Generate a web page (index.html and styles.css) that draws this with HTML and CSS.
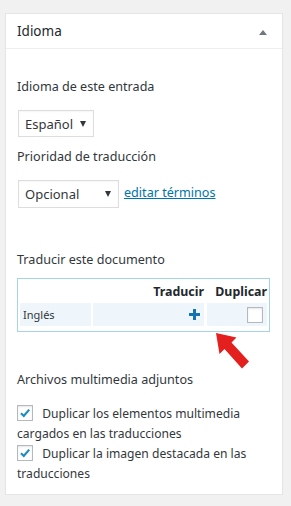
FILE: index.html
```html
<!DOCTYPE html>
<html lang="es">
<head>
  <meta charset="UTF-8" />
  <meta name="viewport" content="width=device-width, initial-scale=1" />
  <title>Idioma</title>
  <link rel="stylesheet" href="styles.css">
</head>
<body>
  <div class="postbox">
    <!-- Box header -->
    <div class="postbox-head">
      <h2>Idioma</h2>
      <span class="toggle-arrow"></span>
    </div>

    <div class="inside">
      <p class="label first">Idioma de este entrada</p>
      <div class="fake-select lang-select">
        <span>Español</span>
        <span class="caret"></span>
      </div>

      <p class="label prio">Prioridad de traducción</p>
      <div class="prio-row">
        <div class="fake-select prio-select">
          <span>Opcional</span>
          <span class="caret"></span>
        </div>
        <a href="#" class="edit-link">editar términos</a>
      </div>

      <p class="label doc">Traducir este documento</p>
      <div class="trans-table">
        <div class="th"></div>
        <div class="th right">Traducir</div>
        <div class="th right">Duplicar</div>
        <div class="td lang">Inglés</div>
        <div class="td right">
          <svg class="plus" width="11" height="11" viewBox="0 0 11 11">
            <rect x="4" y="0" width="3" height="11" fill="#1476b0"/>
            <rect x="0" y="4" width="11" height="3" fill="#1476b0"/>
          </svg>
        </div>
        <div class="td right dup"><span class="box"></span></div>

        <!-- red pointer over the table -->
        <svg class="pointer" width="40" height="40" viewBox="210 330 40 40">
          <polygon points="215,332 235.5,336.5 230.5,341.5 248,360.5 241,367.5 223.5,348 218.5,353" fill="#e3201d"/>
        </svg>
      </div>

      <p class="label media">Archivos multimedia adjuntos</p>
      <div class="check-line top">
        <span class="box checked"><svg width="14" height="14" viewBox="0 0 14 14"><path d="M3 7.2 L5.8 10 L11.2 3.6" fill="none" stroke="#1e8cbe" stroke-width="2.2"/></svg></span>
        Duplicar los elementos multimedia cargados en las traducciones
      </div>
      <div class="check-line">
        <span class="box checked"><svg width="14" height="14" viewBox="0 0 14 14"><path d="M3 7.2 L5.8 10 L11.2 3.6" fill="none" stroke="#1e8cbe" stroke-width="2.2"/></svg></span>
        Duplicar la imagen destacada en las traducciones
      </div>
    </div>
  </div>
</body>
</html>
```
FILE: styles.css
```css
/* Basic reset */
* {
  margin: 0;
  padding: 0;
  box-sizing: border-box;
}

body {
  background-color: #f1f1f1;
  font-family: "Noto Sans", "Open Sans", sans-serif;
  font-size: 12.5px;
  color: #32373c;
}

/* The meta box */
.postbox {
  width: 278px;
  margin: 13px 0 0 5px;
  background: #fff;
  border: 1px solid #e5e5e5;
  box-shadow: 0 1px 1px rgba(0, 0, 0, 0.04);
}

.postbox-head {
  height: 35px;
  display: flex;
  align-items: center;
  justify-content: space-between;
  padding: 0 15px 0 11px;
  border-bottom: 1px solid #eee;
}

.postbox-head h2 {
  font-size: 13.5px;
  font-weight: 400;
  color: #23282d;
  line-height: 20px;
}

.toggle-arrow {
  width: 0;
  height: 0;
  border-left: 4px solid transparent;
  border-right: 4px solid transparent;
  border-bottom: 5px solid #72777c;
  margin-top: 2px;
}

.inside {
  padding: 0 12px 10px 11px;
}

.label {
  line-height: 20px;
  font-size: 12.6px;
}
.label.first { margin-top: 28px; }
.label.prio  { margin-top: 10px; }
.label.doc   { margin-top: 42px; }
.label.media { margin-top: 38px; }

/* Select boxes drawn by hand */
.fake-select {
  display: flex;
  align-items: center;
  justify-content: space-between;
  height: 27px;
  padding: 0 7px 0 6px;
  border: 1px solid #ddd;
  background: #fff;
  color: #32373c;
  font-size: 13px;
  box-shadow: inset 0 1px 2px rgba(0, 0, 0, 0.04);
}
.lang-select {
  width: 76px;
  margin: 13px 0 0 1px;
}
.prio-select {
  width: 101px;
  height: 28px;
}
.caret {
  width: 0;
  height: 0;
  border-left: 3px solid transparent;
  border-right: 3px solid transparent;
  border-top: 6px solid #32373c;
}

.prio-row {
  display: flex;
  align-items: center;
  gap: 5px;
  margin: 13px 0 0 1px;
}
.edit-link {
  color: #0073aa;
  text-decoration: underline;
  line-height: 20px;
  margin-top: -3px;
  font-size: 12.6px;
}

/* Translation table */
.trans-table {
  position: relative;
  margin-top: 8px;
  border: 1px solid #a3d4ea;
  display: grid;
  grid-template-columns: 71px 111px 61px;
  column-gap: 2px;
  padding: 0 1px 5px 2px;
}
.trans-table .th {
  height: 24px;
  line-height: 26px;
  font-size: 12.4px;
  font-weight: 700;
  color: #23282d;
}
.trans-table .th.right:last-of-type {
  padding-right: 1px;
}
.trans-table .td {
  height: 23px;
  background: #eef6fb;
  display: flex;
  align-items: center;
  padding: 0 4px 0 3px;
}
.trans-table .td.dup {
  margin-left: 1px;
}
.trans-table .right {
  text-align: right;
  justify-content: flex-end;
}
.trans-table .td.lang {
  font-size: 11px;
}
.pointer {
  position: absolute;
  left: 193px;
  top: 52px;
}

/* Checkbox look */
.box {
  display: inline-block;
  width: 16px;
  height: 16px;
  border: 1px solid #b4b9be;
  background: #fff;
  box-shadow: inset 0 1px 2px rgba(0, 0, 0, 0.1);
  vertical-align: middle;
}
.box.checked svg {
  display: block;
}

.check-line {
  line-height: 20px;
  font-size: 12.1px;
}
.check-line.top {
  margin-top: 14px;
}
.check-line .box {
  margin: -3px 6px 0 0;
}
```
